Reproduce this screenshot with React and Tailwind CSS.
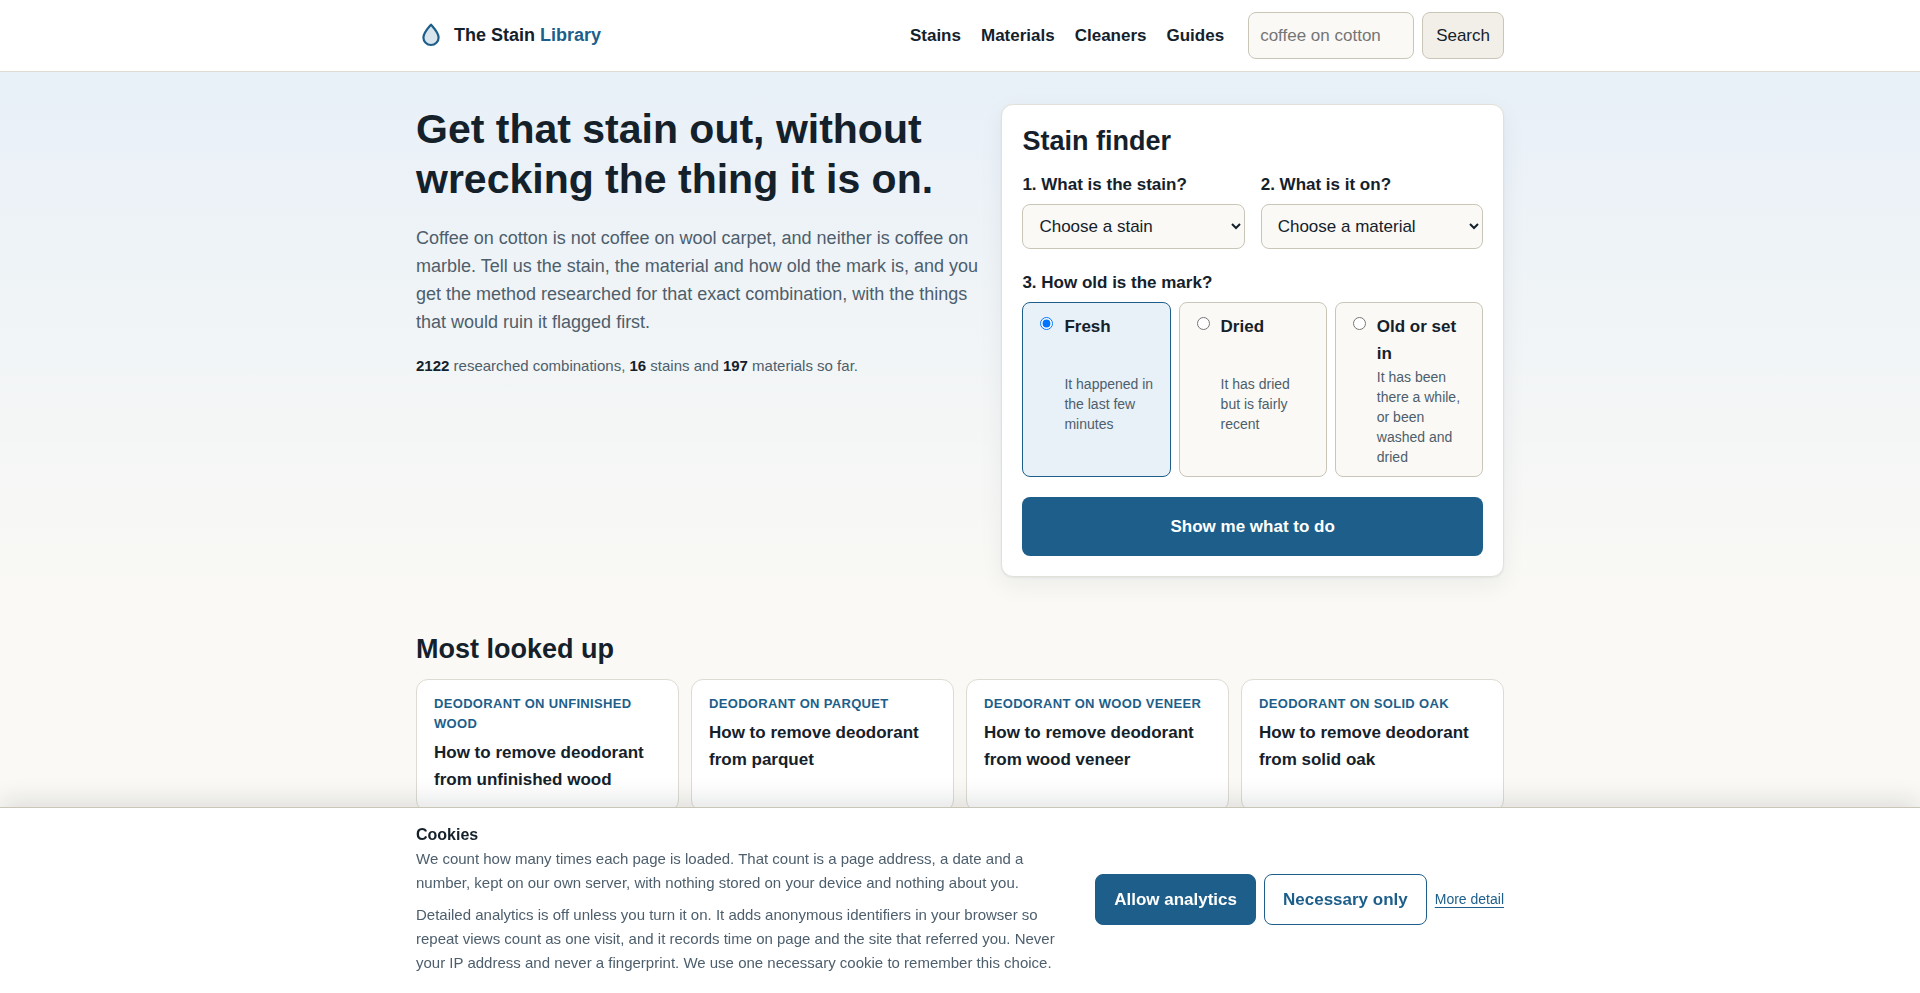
import React, { useState } from 'react';

const navLinks = ['Stains', 'Materials', 'Cleaners', 'Guides'];

const ages = [
  { id: 'fresh', name: 'Fresh', hint: 'It happened in the last few minutes' },
  { id: 'dried', name: 'Dried', hint: 'It has dried but is fairly recent' },
  { id: 'old', name: 'Old or set in', hint: 'It has been there a while, or been washed and dried' },
];

const popular = [
  { tag: 'Deodorant on unfinished wood', title: 'How to remove deodorant from unfinished wood' },
  { tag: 'Deodorant on parquet', title: 'How to remove deodorant from parquet' },
  { tag: 'Deodorant on wood veneer', title: 'How to remove deodorant from wood veneer' },
  { tag: 'Deodorant on solid oak', title: 'How to remove deodorant from solid oak' },
];

const wrap = 'w-full max-w-[1120px] mx-auto px-4';
const field = 'w-full rounded-lg border border-[#c9c6b8] bg-[#faf9f5]';

function Header() {
  return (
    <header className="border-b border-[#dddbd2] bg-white">
      <div className={`${wrap} flex items-center justify-between py-3`}>
        <a href="#" className="flex items-center gap-2 text-[18px] font-bold">
          <svg className="size-[30px]" viewBox="0 0 30 30" aria-hidden="true">
            <path
              d="M15 3.6c3.6 4.2 7.6 8.500 7.600 12.800a7.600 7.600 0 0 1-15.200 0c0-4.300 4-8.600 7.600-12.800z"
              fill="#d9e4ec"
              stroke="#1d5f8a"
              strokeWidth="2.2"
              strokeLinejoin="round"
            />
          </svg>
          <span>
            The Stain <span className="text-[#1d5f8a]">Library</span>
          </span>
        </a>

        <div className="flex items-center gap-6">
          <nav className="flex gap-5 font-bold">
            {navLinks.map((label) => (
              <a key={label} href="#">
                {label}
              </a>
            ))}
          </nav>
          <form className="flex gap-2" onSubmit={(e) => e.preventDefault()}>
            <input
              type="search"
              aria-label="Search"
              placeholder="coffee on cotton"
              className="w-[166px] h-[47px] px-[11px] rounded-lg border border-[#c9c6b8] bg-[#faf9f5] placeholder:text-[#757575]"
            />
            <button className="h-[47px] px-[13px] rounded-lg border border-[#c9c6b8] bg-[#f2efe8]">
              Search
            </button>
          </form>
        </div>
      </div>
    </header>
  );
}

function StainFinder() {
  const [age, setAge] = useState('fresh');

  return (
    <form
      onSubmit={(e) => e.preventDefault()}
      className="rounded-xl border border-[#e2e0d8] bg-white p-5 shadow-[0_1px_2px_rgba(20,33,43,0.06),0_8px_24px_rgba(20,33,43,0.06)]"
    >
      <h2 className="text-[27px] leading-8 font-bold">Stain finder</h2>

      <div className="mt-3.5 grid grid-cols-2 gap-4">
        <div>
          <label htmlFor="stain" className="block mb-1.5 font-bold">
            1. What is the stain?
          </label>
          <select id="stain" className={`${field} h-[45px] px-3`}>
            <option>Choose a stain</option>
          </select>
        </div>
        <div>
          <label htmlFor="material" className="block mb-1.5 font-bold">
            2. What is it on?
          </label>
          <select id="material" className={`${field} h-[45px] px-3`}>
            <option>Choose a material</option>
          </select>
        </div>
      </div>

      <fieldset className="mt-5">
        <legend className="mb-1.5 font-bold">3. How old is the mark?</legend>
        <div className="grid grid-cols-3 gap-2">
          {ages.map((a) => (
            <label
              key={a.id}
              className={`grid grid-cols-[auto_1fr] gap-x-[11px] rounded-lg border pl-[17px] pr-[13px] pt-2.5 pb-[9px] ${
                age === a.id ? 'border-[#1d5f8a] bg-[#e8f0f8]' : 'border-[#c9c6b8] bg-[#faf9f5]'
              }`}
            >
              <input
                type="radio"
                name="age"
                checked={age === a.id}
                onChange={() => setAge(a.id)}
                className="mt-1 size-[13px]"
              />
              <span className="font-bold">{a.name}</span>
              <span className="col-start-2 text-[14px] leading-5 text-[#4d5e6c]">{a.hint}</span>
            </label>
          ))}
        </div>
      </fieldset>

      <button className="mt-5 w-full h-[59px] rounded-lg bg-[#1d5f8a] font-bold text-white">
        Show me what to do
      </button>
    </form>
  );
}

function Hero() {
  return (
    <section className="bg-linear-to-b from-[#e8f0f8] to-[#faf9f5]">
      <div className={`${wrap} grid grid-cols-[1.125fr_1fr] items-start gap-5 pt-8 pb-6`}>
        <div>
          <h1 className="text-[41px] leading-[50px] font-bold">
            Get that stain out, without wrecking the thing it is on.
          </h1>
          <p className="mt-5 text-[18px] leading-7 text-[#4d5e6c]">
            Coffee on cotton is not coffee on wool carpet, and neither is coffee on marble. Tell us
            the stain, the material and how old the mark is, and you get the method researched for
            that exact combination, with the things that would ruin it flagged first.
          </p>
          <p className="mt-[18px] text-[15px] leading-6 text-[#4d5e6c]">
            <strong className="text-[#14212b]">2122</strong> researched combinations,{' '}
            <strong className="text-[#14212b]">16</strong> stains and{' '}
            <strong className="text-[#14212b]">197</strong> materials so far.
          </p>
        </div>
        <StainFinder />
      </div>
    </section>
  );
}

function MostLookedUp() {
  return (
    <section className={`${wrap} pt-8`}>
      <h2 className="text-[27px] leading-8 font-bold">Most looked up</h2>
      <div className="mt-3.5 grid grid-cols-4 gap-3">
        {popular.map((card) => (
          <a
            key={card.tag}
            href="#"
            className="rounded-xl border border-[#dddbd2] bg-white px-[17px] pt-3.5 pb-[18px]"
          >
            <span className="block text-[13px] leading-5 font-bold uppercase tracking-wide text-[#1d5f8a]">
              {card.tag}
            </span>
            <span className="mt-[5px] block font-bold">{card.title}</span>
          </a>
        ))}
      </div>
    </section>
  );
}

function CookieBar() {
  return (
    <aside
      aria-label="Cookies"
      className="fixed inset-x-0 bottom-0 border-t border-[#c9c6b8] bg-white shadow-[0_-6px_24px_rgba(20,25,33,0.12)]"
    >
      <div className={`${wrap} flex items-center justify-between gap-6 pt-[15px] pb-[18px]`}>
        <div className="max-w-[640px] text-[15px] leading-6 text-[#4d5e6c]">
          <h2 className="text-[16px] font-bold text-[#14212b]">Cookies</h2>
          <p>
            We count how many times each page is loaded. That count is a page address, a date and a
            number, kept on our own server, with nothing stored on your device and nothing about
            you.
          </p>
          <p className="mt-2">
            Detailed analytics is off unless you turn it on. It adds anonymous identifiers in your
            browser so repeat views count as one visit, and it records time on page and the site
            that referred you. Never your IP address and never a fingerprint. We use one necessary
            cookie to remember this choice.
          </p>
        </div>
        <div className="flex shrink-0 items-center gap-2">
          <button className="h-[51px] px-[18px] rounded-lg border border-[#1d5f8a] bg-[#1d5f8a] font-bold text-white">
            Allow analytics
          </button>
          <button className="h-[51px] px-[18px] rounded-lg border border-[#1d5f8a] bg-white font-bold text-[#1d5f8a]">
            Necessary only
          </button>
          <a href="#" className="text-[14px] text-[#1d5f8a] underline underline-offset-3">
            More detail
          </a>
        </div>
      </div>
    </aside>
  );
}

export default function App() {
  return (
    <div className="min-h-screen bg-[#faf9f5] pb-48 font-['Liberation_Sans',Arial,sans-serif] text-[17px] leading-[27px] text-[#14212b]">
      <Header />
      <main>
        <Hero />
        <MostLookedUp />
      </main>
      <CookieBar />
    </div>
  );
}
